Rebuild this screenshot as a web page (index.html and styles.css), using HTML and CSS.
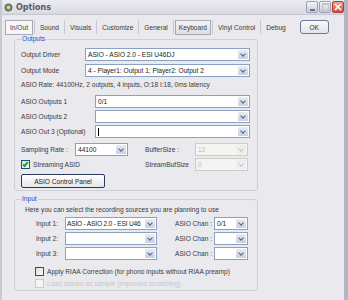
FILE: index.html
```html
<!DOCTYPE html>
<html>
<head>
    <title>Options</title>
    <link rel="stylesheet" href="styles.css">
</head>
<body>

<div class="window">
    <div class="titlebar">
        <svg class="app-icon" width="9" height="9" viewBox="0 0 9 9">
            <circle cx="4.5" cy="4.5" r="3.5" fill="#8a9a6a" stroke="#4a5a3a" stroke-width="1"/>
            <circle cx="4.5" cy="4.5" r="1.3" fill="#e8e8d8"/>
        </svg>
        <span class="title">Options</span>
        <div class="caption-buttons">
            <span class="cap-btn"><span class="min-bar"></span></span>
            <span class="cap-btn disabled"><span class="max-box"></span></span>
            <span class="cap-btn close">
                <svg width="8" height="8" viewBox="0 0 8 8"><path d="M1 1 L7 7 M7 1 L1 7" stroke="#fff" stroke-width="1.6"/></svg>
            </span>
        </div>
    </div>

    <div class="client">
        <div class="tabs">
            <span class="tab active">In/Out</span>
            <span class="tab-sep"></span>
            <span class="tab">Sound</span>
            <span class="tab-sep"></span>
            <span class="tab">Visuals</span>
            <span class="tab-sep"></span>
            <span class="tab">Customize</span>
            <span class="tab-sep"></span>
            <span class="tab">General</span>
            <span class="tab-sep"></span>
            <span class="tab boxed">Keyboard</span>
            <span class="tab-sep"></span>
            <span class="tab">Vinyl Control</span>
            <span class="tab-sep"></span>
            <span class="tab">Debug</span>
            <button class="ok-button">OK</button>
        </div>

        <div class="page">
            <fieldset class="group outputs">
                <legend>Outputs</legend>
                <div class="row first">
                    <span class="label w64">Output Driver</span>
                    <div class="combo w165"><span class="value">ASIO - ASIO 2.0 - ESI U46DJ</span><span class="drop"></span></div>
                </div>
                <div class="row">
                    <span class="label w64">Output Mode</span>
                    <div class="combo w165"><span class="value">4 - Player1: Output 1; Player2: Output 2</span><span class="drop"></span></div>
                </div>
                <div class="info">ASIO Rate: 44100Hz, 2 outputs, 4 inputs, O:18 I:18, 0ms latency</div>
                <div class="row asio">
                    <span class="label w74">ASIO Outputs 1</span>
                    <div class="combo w155"><span class="value">0/1</span><span class="drop"></span></div>
                </div>
                <div class="row tight">
                    <span class="label w74">ASIO Outputs 2</span>
                    <div class="combo w155"><span class="value"></span><span class="drop"></span></div>
                </div>
                <div class="row tight">
                    <span class="label w74">ASIO Out 3 (Optional)</span>
                    <div class="combo w155"><span class="value"><span class="caret"></span></span><span class="drop"></span></div>
                </div>
                <div class="row sampling">
                    <span class="label w54">Sampling Rate :</span>
                    <div class="combo w53"><span class="value">44100</span><span class="drop"></span></div>
                    <span class="label w50 gap17">BufferSize :</span>
                    <div class="combo w53 disabled"><span class="value">12</span><span class="drop"></span></div>
                </div>
                <div class="row tight">
                    <label class="check w124"><span class="box checked"></span>Streaming ASID</label>
                    <span class="label w50">StreamBufSize</span>
                    <div class="combo w53 disabled"><span class="value">0</span><span class="drop"></span></div>
                </div>
                <button class="push">ASIO Control Panel</button>
            </fieldset>

            <fieldset class="group inputs">
                <legend>Input</legend>
                <div class="info intro">Here you can select the recording sources you are planning to use</div>
                <div class="row in-first">
                    <span class="label in-label">Input 1:</span>
                    <div class="combo w92"><span class="value narrow">ASIO - ASIO 2.0 - ESI U46</span><span class="drop"></span></div>
                    <span class="label chan-label">ASIO Chan :</span>
                    <div class="combo w34"><span class="value">0/1</span><span class="drop"></span></div>
                </div>
                <div class="row tight">
                    <span class="label in-label">Input 2:</span>
                    <div class="combo w92"><span class="value"></span><span class="drop"></span></div>
                    <span class="label chan-label">ASIO Chan :</span>
                    <div class="combo w34"><span class="value"></span><span class="drop"></span></div>
                </div>
                <div class="row tight">
                    <span class="label in-label">Input 3:</span>
                    <div class="combo w92"><span class="value"></span><span class="drop"></span></div>
                    <span class="label chan-label">ASIO Chan :</span>
                    <div class="combo w34"><span class="value"></span><span class="drop"></span></div>
                </div>
                <label class="check riaa"><span class="box"></span>Apply RIAA Correction (for phono inputs without RIAA preamp)</label>
                <label class="check load disabled"><span class="box"></span>Load stream as sample (improved scratching)</label>
            </fieldset>
        </div>
    </div>
</div>

</body>
</html>
```

FILE: styles.css
```css
body {
    margin: 0;
    background-color: #e9e9ee;
    font-family: "Liberation Sans", Arial, sans-serif;
    font-size: 6.6px;
    color: #3a3a3a;
}

.window {
    width: 348px;
    height: 300px;
    background-color: #e9e9ee;
    box-sizing: border-box;
    border-right: 4px solid #b4b4c2;
    border-left: 2px solid #c9c9d3;
    overflow: hidden;
}

/* title bar */
.titlebar {
    height: 14px;
    display: flex;
    align-items: center;
    background: linear-gradient(#ececf2, #d8d8e2);
    border-bottom: 1px solid #c8c8d4;
}

.app-icon {
    margin-left: 2px;
}

.title {
    margin-left: 3px;
    font-family: "DejaVu Sans", sans-serif;
    font-weight: bold;
    font-size: 8px;
    color: #5a5a64;
}

.caption-buttons {
    margin-left: auto;
    display: flex;
    gap: 1px;
}

.cap-btn {
    width: 10px;
    height: 10px;
    border: 1px solid #9aa0b6;
    border-radius: 2px;
    background: linear-gradient(#f4f4fa, #c8cad8);
    display: flex;
    align-items: center;
    justify-content: center;
}

.cap-btn .min-bar {
    width: 5px;
    height: 2px;
    background: #6b7086;
    margin-top: 5px;
}

.cap-btn .max-box {
    width: 5px;
    height: 5px;
    border: 1px solid #c0c2d0;
    border-top-width: 2px;
}

.cap-btn.close {
    background: linear-gradient(#f0a090, #d0503c);
    border-color: #b04030;
}

/* tabs */
.tabs {
    display: flex;
    align-items: center;
    height: 20px;
    margin-top: 2px;
    padding-left: 3px;
}

.tab {
    padding: 0 4px;
    line-height: 11px;
    white-space: nowrap;
}

.tab.active {
    border: 1px solid #a8a8b4;
    background: #f6f6f8;
    padding: 1px 4px;
}

.tab.boxed {
    border: 1px solid #a8a8b4;
    background: linear-gradient(#f4f4f6, #dcdce2);
    padding: 1px 3px;
}

.tab-sep {
    width: 1px;
    height: 14px;
    background: #c8c8d0;
    margin: 0 1px;
}

.ok-button {
    margin-left: 10px;
    width: 29px;
    height: 14px;
    font-family: inherit;
    font-size: 6.6px;
    color: #333;
    border: 1px solid #6b7a96;
    border-radius: 3px;
    background: linear-gradient(#fafafc, #e2e2ea);
    padding: 0;
}

/* page */
.page {
    padding-left: 12px;
}

.group {
    width: 244px;
    box-sizing: border-box;
    margin: 0;
    border: 1px solid #cfcfd8;
    border-radius: 3px;
    padding: 0 7px 0 6px;
    display: flex;
    flex-direction: column;
}

.group legend {
    color: #2050c8;
    padding: 0 1px;
    line-height: 8px;
}

.outputs {
    height: 156px;
    margin-top: -2px;
}

.inputs {
    height: 96px;
    margin-top: 4px;
}

.row {
    display: flex;
    align-items: center;
    margin-top: 3px;
}

.row.first {
    margin-top: 5px;
}

.row.tight {
    margin-top: 2px;
}

.row.asio {
    margin-top: 6px;
}

.row.sampling {
    margin-top: 5px;
}

.label {
    flex: none;
    white-space: nowrap;
}

.w54 { width: 54px; }
.w64 { width: 64px; }
.w74 { width: 74px; }
.w50 { width: 50px; }
.w124 { width: 124px; }
.gap17 { margin-left: 17px; }

.combo {
    flex: none;
    height: 13px;
    box-sizing: border-box;
    border: 1px solid #8aa2c0;
    background: #fff;
    display: flex;
    align-items: stretch;
}

.w165 { width: 165px; }
.w155 { width: 155px; }
.w53 { width: 53px; }
.w92 { width: 92px; }
.w34 { width: 34px; }

.combo .value {
    flex: 1;
    min-width: 0;
    padding-left: 2px;
    line-height: 11px;
    white-space: nowrap;
    overflow: hidden;
    color: #1a1a1a;
}

.combo .value.narrow {
    padding-left: 1px;
    letter-spacing: -0.2px;
}

.combo .drop {
    flex: none;
    width: 10px;
    margin: 1px;
    border-radius: 1px;
    background: linear-gradient(#e8ecf4, #c8d0e0);
    position: relative;
}

.combo .drop::after {
    content: "";
    position: absolute;
    left: 3px;
    top: 2px;
    width: 3px;
    height: 3px;
    border-right: 1px solid #4d6185;
    border-bottom: 1px solid #4d6185;
    transform: rotate(45deg);
}

.combo.disabled {
    border-color: #cfcdc2;
    background: #f4f4f2;
}

.combo.disabled .value {
    color: #bcbcbc;
}

.combo.disabled .drop {
    background: #eceef0;
}

.combo.disabled .drop::after {
    border-color: #c6c6c6;
}

.caret {
    display: inline-block;
    width: 1px;
    height: 8px;
    background: #000;
    vertical-align: middle;
}

.info {
    margin-top: 4px;
    line-height: 8px;
    white-space: nowrap;
}

.intro {
    margin-top: 3px;
    padding-left: 4px;
}

.check {
    display: flex;
    align-items: center;
    gap: 3px;
    white-space: nowrap;
}

.check .box {
    width: 7px;
    height: 7px;
    border: 1px solid #1c5180;
    background: linear-gradient(135deg, #e0e0da, #fafaf8);
    position: relative;
}

.check .box.checked::after {
    content: "";
    position: absolute;
    left: 2px;
    top: 0;
    width: 1px;
    height: 4px;
    border-right: 2px solid #21a121;
    border-bottom: 2px solid #21a121;
    transform: rotate(40deg);
}

.push {
    margin-top: 3px;
    width: 84px;
    height: 14px;
    padding: 0;
    font-family: inherit;
    font-size: 6.6px;
    color: #222;
    border: 1px solid #2a3a5a;
    border-radius: 2px;
    background: linear-gradient(#ffffff, #e4e4ea);
}

.in-first {
    margin-top: 3px;
}

.in-label {
    width: 29px;
    padding-left: 15px;
}

.chan-label {
    width: 39px;
    margin-left: 18px;
}

.riaa {
    margin-top: 7px;
    padding-left: 14px;
}

.load {
    margin-top: 3px;
    padding-left: 14px;
    color: #c8c8cc;
}

.load .box {
    border-color: #cacac6;
    background: #f4f4f2;
}
```
